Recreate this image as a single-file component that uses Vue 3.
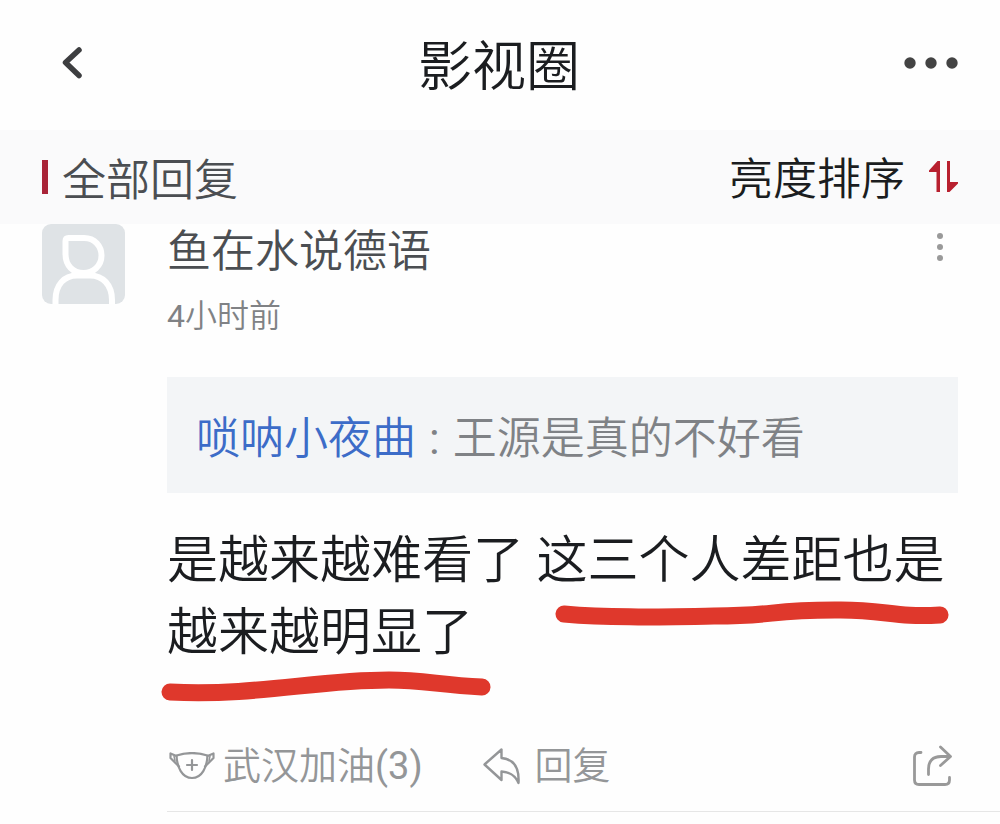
<script setup>
const title = '影视圈'
const comment = {
  author: '鱼在水说德语',
  hours: 4,
  quoteAuthor: '唢呐小夜曲',
  quoteText: '王源是真的不好看',
  text: '是越来越难看了 这三个人差距也是越来越明显了',
  likes: 3,
}
</script>

<template>
  <div class="page" lang="zh-CN">
    <header class="topbar">
      <button class="icon-btn back" type="button" aria-label="返回">
        <svg width="24" height="36" viewBox="0 0 24 36">
          <path d="M19 5 L5.500 17.500 L19 30.500" fill="none" stroke="#3d3e40" stroke-width="5.500" stroke-linecap="round" stroke-linejoin="round" />
        </svg>
      </button>
      <h1>{{ title }}</h1>
      <button class="icon-btn more" type="button" aria-label="更多">
        <svg width="54" height="12" viewBox="0 0 54 12" fill="#434343">
          <circle cx="6" cy="6" r="5.700" /><circle cx="27" cy="6" r="5.700" /><circle cx="48" cy="6" r="5.700" />
        </svg>
      </button>
    </header>

    <section class="sortbar">
      <h2>全部回复</h2>
      <button class="sort" type="button">
        <span>亮度排序</span>
        <svg width="29" height="32" viewBox="0 0 29 32" fill="#b8202f">
          <path d="M8.500 0 H11 V31 H7.500 V11 H0 V9.500 Z" />
          <path d="M18 0 H21 V21 H29 V22.500 L20.500 31 H18 Z" />
        </svg>
      </button>
    </section>

    <article class="comment">
      <svg class="avatar" width="83" height="80" viewBox="0 0 83 80">
        <rect width="83" height="80" rx="9" fill="#dfe3e6" />
        <g fill="none" stroke="#fff" stroke-width="6">
          <path d="M26.500 14 H42 C53 14 59.500 22.500 59.500 31.500 C59.500 42 51 49 41.500 49 C31 49 23.500 41.500 23.500 30 V17 Q23.500 14 26.500 14 Z" stroke-linejoin="round" />
          <path d="M13.500 80 V76 C13.500 61 22 51.500 35 51.500 H48 C61 51.500 70 61 70 76 V80" />
        </g>
      </svg>
      <div class="content">
        <div class="meta">
          <div>
            <div class="author">{{ comment.author }}</div>
            <div class="time"><span class="latin">{{ comment.hours }}</span>小时前</div>
          </div>
          <button class="icon-btn menu" type="button" aria-label="评论菜单">
            <svg width="36" height="28" viewBox="0 0 36 28" fill="#999">
              <circle cx="18" cy="3" r="3" /><circle cx="18" cy="14" r="3" /><circle cx="18" cy="25" r="3" />
            </svg>
          </button>
        </div>

        <blockquote><a href="#">{{ comment.quoteAuthor }}</a><span class="latin colon">:</span>{{ comment.quoteText }}</blockquote>

        <div class="body">
          <p>{{ comment.text }}</p>
          <svg class="marks" width="800" height="190" viewBox="0 0 800 190" fill="none" stroke="#df382c" stroke-width="17" stroke-linecap="round" stroke-linejoin="round">
            <path d="M405 90 C450 94 495 93 555 92 C620 92 606 86 676 86 C725 85 735 94 781 91" />
            <path d="M11 168 C100 172 155 156 230 156 C265 156 280 161 323 163" />
          </svg>
        </div>

        <footer class="actions">
          <button class="action" type="button">
            <svg width="46" height="28" viewBox="0 0 46 28" fill="none" stroke="#949698" stroke-width="2.200" stroke-linejoin="round" stroke-linecap="round">
              <path d="M7.500 3.500 C17 .500 29 .500 38.500 3.500 C38 15 33 26 23 26 C13 26 8 15 7.500 3.500 Z" />
              <path d="M7.500 4 L1.500 1.500 V6 L10 14.500 M38.500 4 L44.500 1.500 V6 L36 14.500 M23 8 V18 M18 13 H28" />
              <path d="M5 4 L6 9 M41 4 L40 9" stroke-width="1.500" />
            </svg>
            <span>武汉加油<span class="latin">({{ comment.likes }})</span></span>
          </button>
          <button class="action reply" type="button">
            <svg width="38" height="38" viewBox="0 0 38 38" fill="none" stroke="#949698" stroke-width="2.400" stroke-linejoin="round">
              <path d="M1.500 17.500 L18.500 2.500 V11 C30 12 36.500 20 35.500 36 C32 28 27 25 18.500 24.500 V33 Z" />
            </svg>
            <span>回复</span>
          </button>
          <button class="icon-btn share" type="button" aria-label="分享">
            <svg width="42" height="42" viewBox="0 0 42 42" fill="none" stroke="#999" stroke-width="2.800" stroke-linecap="round" stroke-linejoin="round">
              <path d="M9 7.500 H7 Q2.500 7.500 2.500 12 V35 Q2.500 39.500 7 39.500 H33 Q37.500 39.500 37.500 35 V32.500" />
              <path d="M16.500 29.500 V24 Q16.500 11.500 29 11.500 H38 M28.500 2 L38.500 11.500 L28.500 20.500" />
            </svg>
          </button>
        </footer>
      </div>
    </article>
  </div>
</template>

<style>
body {
  margin: 0;
  background: #fefefe;
}
</style>

<style scoped>
.page {
  font-family: Roboto, "Noto Sans CJK SC DemiLight", "Noto Sans CJK SC", sans-serif;
  font-weight: 350;
  color: #1b1d20;
}
h1, h2, p, blockquote {
  margin: 0;
  font-weight: inherit;
}
button {
  padding: 0;
  border: 0;
  background: none;
  font: inherit;
  color: inherit;
  cursor: pointer;
}
svg {
  display: block;
  flex: none;
}
.latin {
  font-weight: 400;
}
.topbar {
  display: grid;
  grid-template-columns: 1fr auto 1fr;
  align-items: center;
  height: 130px;
  padding: 0 42px 4px 60px;
  box-sizing: border-box;
}
.back {
  justify-self: start;
}
.more {
  justify-self: end;
}
h1 {
  margin-right: 20px;
  padding-top: 10px;
  font-size: 54px;
  line-height: 72px;
}
.sortbar {
  display: flex;
  justify-content: space-between;
  align-items: center;
  height: 94px;
  padding: 0 42px;
  background: #fafafb;
}
h2 {
  position: relative;
  padding: 8px 0 0 20px;
  font-size: 44px;
  line-height: 60px;
  color: #4b4e52;
}
h2::before {
  content: "";
  position: absolute;
  left: 0;
  top: 17px;
  width: 6px;
  height: 34px;
  background: #a92438;
}
.sort {
  display: flex;
  align-items: center;
  gap: 24px;
  font-size: 44px;
  line-height: 60px;
}
.sort span {
  padding-top: 6px;
}
.comment {
  display: flex;
  gap: 42px;
  padding-left: 42px;
}
.content {
  flex: 1;
  min-width: 0;
  border-bottom: 1px solid #e6e6e6;
}
.meta, blockquote, .body, .actions {
  margin-right: 42px;
}
.meta {
  display: flex;
  justify-content: space-between;
  align-items: flex-start;
}
.author {
  font-size: 44px;
  line-height: 56px;
  color: #4b4e52;
}
.time {
  margin-top: 14px;
  font-size: 32px;
  line-height: 44px;
  color: #808285;
}
.menu {
  margin-top: 9px;
}
blockquote {
  margin-top: 39px;
  padding: 32px 29px 24px;
  background: #f3f5f7;
  font-size: 44px;
  line-height: 60px;
  color: #7f8286;
}
blockquote a {
  color: #3c6cc8;
  text-decoration: none;
}
.colon {
  padding: 0 13px;
}
.body {
  position: relative;
  margin-top: 32px;
}
.body p {
  font-size: 51px;
  line-height: 72px;
}
.marks {
  position: absolute;
  left: -8px;
  top: -1px;
  pointer-events: none;
}
.actions {
  display: flex;
  align-items: center;
  margin-top: 69px;
  padding: 0 4px 17px 2px;
  font-size: 38px;
  line-height: 56px;
  color: #949698;
}
.action {
  display: flex;
  align-items: center;
  gap: 8px;
}
.reply {
  gap: 14px;
  margin-left: 60px;
}
.share {
  margin-left: auto;
}
</style>
